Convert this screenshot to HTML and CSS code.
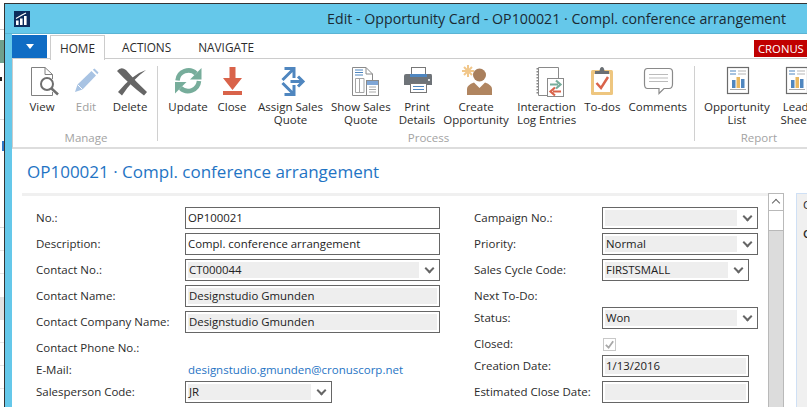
FILE: index.html
```html
<!DOCTYPE html>
<html lang="en">
<head>
<meta charset="utf-8">
<title>Edit - Opportunity Card</title>
<link rel="stylesheet" href="styles.css">
</head>
<body>
<div class="desk"></div>
<div class="window">
  <header class="titlebar">
    <svg class="logo" viewBox="0 0 16 16"><rect width="16" height="16" fill="#0d2b5c"/><path d="M2 14V9.500h2.600V14zM6 14V7.500h2.600V14zM10 14V5h2.600V14z" fill="#fff"/><path d="M2 7.500 8 4l4-2" fill="none" stroke="#fff" stroke-width="1.100"/></svg>
    <div class="title">Edit - Opportunity Card - OP100021 · Compl. conference arrangement</div>
  </header>
  <div class="shell">
    <nav class="tabs">
      <div class="filebtn"><span class="caret"></span></div>
      <div class="tab active">HOME</div>
      <div class="tab t-actions">ACTIONS</div>
      <div class="tab t-navigate">NAVIGATE</div>
      <div class="cronus">CRONUS</div>
    </nav>
    <section class="ribbon">
      <div class="group group-manage">
        <div class="buttons">
          <div class="rbtn">
            <svg class="ico" viewBox="0 0 32 32"><path d="M5.500 2.500H19L26.500 9.500V14M19 2.500V9.500H26.500M26.500 27V30.500H5.500V2.500" fill="none" stroke="#808080"/><circle cx="21" cy="19" r="6" fill="#fff" stroke="#6f6f6f" stroke-width="2"/><path d="M25.500 23.500 32 29.500" stroke="#6f6f6f" stroke-width="2.500"/></svg>
            <span class="lbl">View</span>
          </div>
          <div class="rbtn off">
            <svg class="ico" viewBox="0 0 32 32"><path d="M5 27 7.500 19.500 21.500 6 26 10.500 12.500 24.500Z" fill="#a8c3e3"/><path d="M22.800 4.700 24.500 3.500 28.500 7.500 27.300 9.200Z" fill="#a8c3e3"/><path d="M7.500 19.500 12.500 24.500" stroke="#fff"/></svg>
            <span class="lbl">Edit</span>
          </div>
          <div class="rbtn">
            <svg class="ico" viewBox="0 0 32 32"><path d="M3 6Q7 1 12 5 22 17 33 27L30 30.500Q16 20 3 6Z" fill="#666"/><path d="M32 5Q19 9 4 27L8 30.500Q18 15 32 5Z" fill="#666"/></svg>
            <span class="lbl">Delete</span>
          </div>
        </div>
        <div class="grouplbl">Manage</div>
      </div>
      <div class="sep"></div>
      <div class="group">
        <div class="buttons">
          <div class="rbtn tight">
            <svg class="ico" viewBox="0 0 32 32"><path d="M5.500 15.500A11 11 0 0 1 24 8.500" fill="none" stroke="#77ad9b" stroke-width="4.500"/><path d="M29.500 3V14.500H18Z" fill="#77ad9b"/><path d="M27 16A11 11 0 0 1 8.500 23" fill="none" stroke="#77ad9b" stroke-width="4.500"/><path d="M3 28.500V17H14.500Z" fill="#77ad9b"/></svg>
            <span class="lbl">Update</span>
          </div>
          <div class="rbtn">
            <svg class="ico" viewBox="0 0 32 32"><path d="M13.500 2H19.500V13H26L16.500 25 7 13H13.500Z" fill="#d9634a"/><rect x="7" y="26" width="19" height="4" fill="#d9634a"/></svg>
            <span class="lbl">Close</span>
          </div>
          <div class="rbtn">
            <svg class="ico" viewBox="0 0 32 32"><g fill="none" stroke="#4f86bf" stroke-width="3"><path d="M8.500 15 19 4.500M10.500 3.500H20V13"/><path d="M8.500 18 19 28.500M10.500 29.500H20V20"/><path d="M16.500 16.500H28.500M24 11.500 29 16.500 24 21.500"/></g></svg>
            <span class="lbl">Assign Sales<br>Quote</span>
          </div>
          <div class="rbtn">
            <svg class="ico" viewBox="0 0 32 32"><path d="M7.500 2.500H21L27.500 9V16M21 2.500V9H27.500M21 30.500H7.500V2.500" fill="none" stroke="#8a8a8a"/><path d="M10 5h8M10 7.500h8M10 10h8" stroke="#4f86bf"/><path d="M10.500 13.500H19V27.500H10.500ZM14.500 13.500V27.500" fill="none" stroke="#a5a5a5"/><rect x="21.500" y="15.500" width="12" height="15" fill="#fff" stroke="#8a8a8a"/><rect x="22" y="16" width="11" height="4" fill="#7fa6d6"/><path d="M24 22h7M24 24.500h7M24 27h7" stroke="#aaa"/></svg>
            <span class="lbl">Show Sales<br>Quote</span>
          </div>
          <div class="rbtn">
            <svg class="ico" viewBox="0 0 32 32"><rect x="10.500" y="2.500" width="14" height="9" fill="#fff" stroke="#777"/><path d="M5 9H30Q31 9 31 11V20H3V11Q3 9 5 9Z" fill="#6e7378"/><rect x="9" y="9" width="17" height="3" fill="#4f86bf"/><circle cx="28" cy="15" r="1" fill="#fff"/><rect x="9.500" y="18.500" width="16" height="9" fill="#fff" stroke="#777"/><path d="M12 21.500H23M12 24.500H23" stroke="#4f86bf"/></svg>
            <span class="lbl">Print<br>Details</span>
          </div>
          <div class="rbtn">
            <svg class="ico" viewBox="0 0 32 32"><path d="M8 0V12M2 6H14M4 2 12 10M12 2 4 10" stroke="#f1c78b" stroke-width="2"/><circle cx="19.500" cy="10" r="6.500" fill="#a97f5c"/><path d="M7 30V24Q7 20 14 17.500L19.500 23 25 17.500Q32 20 32 24V30Z" fill="#b08560"/></svg>
            <span class="lbl">Create<br>Opportunity</span>
          </div>
          <div class="rbtn">
            <svg class="ico" viewBox="0 0 32 32"><path d="M7.500 2.500H27.500V13M16 30.500H7.500V2.500" fill="none" stroke="#8a8a8a"/><path d="M6.500 3V30" stroke="#8a8a8a" stroke-width="2" stroke-dasharray="1.500 1.500"/><rect x="16.500" y="13.500" width="16" height="18" fill="#fff" stroke="#8a8a8a"/><path d="M19 19.500H27M25 15.500 29.500 19.500 25 23.500" fill="none" stroke="#77ad9b" stroke-width="2.200"/><path d="M30 26.500H22M24 22.500 19.500 26.500 24 30.500" fill="none" stroke="#d9634a" stroke-width="2.200"/></svg>
            <span class="lbl">Interaction<br>Log Entries</span>
          </div>
          <div class="rbtn">
            <svg class="ico" viewBox="0 0 32 32"><rect x="5" y="5" width="22" height="25" rx="1.500" fill="#eec67f"/><rect x="8" y="9" width="16" height="18" fill="#fff"/><path d="M9 9V6H13.500Q14 2 16 2 18 2 18.500 6H23V9Z" fill="#6a6f73"/><path d="M10.500 18 15 23 22 12" fill="none" stroke="#d9634a" stroke-width="2.500"/></svg>
            <span class="lbl">To-dos</span>
          </div>
          <div class="rbtn">
            <svg class="ico" viewBox="0 0 32 32"><path d="M5.500 3.500H27Q30.500 3.500 30.500 7V19Q30.500 23.500 27 23.500H22L17 28.500V23.500H5.500Q2.500 23.500 2.500 19V7Q2.500 3.500 5.500 3.500Z" fill="#fff" stroke="#8a8a8a" stroke-width="1.200"/><path d="M7 9.500H26M7 13H26M7 16.500H26" stroke="#bbb"/></svg>
            <span class="lbl">Comments</span>
          </div>
        </div>
        <div class="grouplbl">Process</div>
      </div>
      <div class="sep"></div>
      <div class="group group-report">
        <div class="buttons">
          <div class="rbtn">
            <svg class="ico" viewBox="0 0 32 32"><rect x="6.500" y="2.500" width="21" height="26" fill="#fff" stroke="#6b6b6b" stroke-width="1.200"/><path d="M9 6H15M9 9H15" stroke="#4f86bf"/><path d="M17 6H25M17 9H25" stroke="#b5b5b5"/><rect x="11" y="15" width="3.500" height="8" fill="#4f86bf"/><rect x="15.500" y="12" width="3.500" height="11" fill="#e9b75f"/><rect x="20" y="14" width="3.500" height="9" fill="#4f86bf"/><path d="M9 24.500H25" stroke="#aaa"/></svg>
            <span class="lbl">Opportunity<br>List</span>
          </div>
          <div class="rbtn">
            <svg class="ico" viewBox="0 0 32 32"><rect x="6.500" y="2.500" width="21" height="26" fill="#fff" stroke="#6b6b6b" stroke-width="1.200"/><path d="M9 6H15M9 9H15" stroke="#4f86bf"/><path d="M17 6H25M17 9H25" stroke="#b5b5b5"/><rect x="11" y="15" width="3.500" height="8" fill="#4f86bf"/><rect x="15.500" y="12" width="3.500" height="11" fill="#e9b75f"/><rect x="20" y="14" width="3.500" height="9" fill="#4f86bf"/><path d="M9 24.500H25" stroke="#aaa"/></svg>
            <span class="lbl">Lead<br>Sheet</span>
          </div>
        </div>
        <div class="grouplbl">Report</div>
      </div>
    </section>
    <main class="page">
      <h1 class="heading">OP100021 · Compl. conference arrangement</h1>
      <div class="body">
        <div class="card">
          <div class="col col-left">
            <div class="row"><label>No.:</label><div class="box">OP100021</div></div>
            <div class="row"><label>Description:</label><div class="box">Compl. conference arrangement</div></div>
            <div class="row"><label>Contact No.:</label><div class="box"><span class="fill">CT000044</span><span class="chev"></span></div></div>
            <div class="row"><label>Contact Name:</label><div class="box"><span class="fill">Designstudio Gmunden</span></div></div>
            <div class="row"><label>Contact Company Name:</label><div class="box"><span class="fill">Designstudio Gmunden</span></div></div>
            <div class="row plain"><label>Contact Phone No.:</label></div>
            <div class="row plain"><label>E-Mail:</label><a class="mail">designstudio.gmunden@cronuscorp.net</a></div>
            <div class="row"><label>Salesperson Code:</label><div class="box short"><span class="fill">JR</span><span class="chev"></span></div></div>
          </div>
          <div class="col col-right">
            <div class="row"><label>Campaign No.:</label><div class="box"><span class="fill"></span><span class="chev"></span></div></div>
            <div class="row"><label>Priority:</label><div class="box"><span class="fill">Normal</span><span class="chev"></span></div></div>
            <div class="row"><label>Sales Cycle Code:</label><div class="box narrow"><span class="fill">FIRSTSMALL</span><span class="chev"></span></div></div>
            <div class="row plain"><label>Next To-Do:</label></div>
            <div class="row"><label>Status:</label><div class="box"><span class="fill">Won</span><span class="chev"></span></div></div>
            <div class="row plain"><label>Closed:</label><span class="check"><svg viewBox="0 0 12 12"><path d="M2 6.500 5 9.500 10 2.500" fill="none" stroke="#a8a8a8" stroke-width="2"/></svg></span></div>
            <div class="row"><label>Creation Date:</label><div class="box narrow"><span class="fill">1/13/2016</span></div></div>
            <div class="row"><label>Estimated Close Date:</label><div class="box narrow"><span class="fill"></span></div></div>
          </div>
        </div>
        <div class="scroll">
          <div class="sbtn"><span class="up"></span></div>
          <div class="thumb"></div>
          <div class="track"></div>
        </div>
        <aside class="side">
          <div class="side-a">Customer</div>
          <div class="side-b">Contact</div>
        </aside>
      </div>
    </main>
  </div>
</div>
</body>
</html>
```

FILE: styles.css
```css
* { box-sizing: border-box; }
html, body { margin: 0; height: 100%; }
body {
  width: 807px;
  height: 407px;
  overflow: hidden;
  display: flex;
  background: #fff;
  font-family: "Open Sans", "Noto Sans", sans-serif;
  font-size: 11.5px;
  color: #2b2b2b;
}
.desk {
  width: 4px;
  flex: none;
  background:
    linear-gradient(#6f9f8c, #6f9f8c) 0 40px / 4px 23px no-repeat,
    linear-gradient(#222, #222) 0 77px / 2px 4px no-repeat,
    linear-gradient(#ccc, #ccc) 0 29px / 4px 1px no-repeat,
    linear-gradient(#ddd, #ddd) 0 119px / 4px 1px no-repeat,
    linear-gradient(#2f78c8, #2f78c8) 2px 141px / 2px 10px no-repeat,
    linear-gradient(#ddd, #ddd) 0 227px / 4px 1px no-repeat,
    linear-gradient(#e6e6e6, #e6e6e6) 0 250px / 4px 1px no-repeat,
    linear-gradient(#e6e6e6, #e6e6e6) 0 273px / 4px 1px no-repeat,
    linear-gradient(#e2e2e2, #e2e2e2) 0 297px / 4px 23px no-repeat,
    linear-gradient(#e6e6e6, #e6e6e6) 0 342px / 4px 1px no-repeat,
    linear-gradient(#e6e6e6, #e6e6e6) 0 365px / 4px 1px no-repeat,
    linear-gradient(#e6e6e6, #e6e6e6) 0 388px / 4px 1px no-repeat;
}
.window {
  flex: 1;
  min-width: 0;
  margin-top: 3px;
  display: flex;
  flex-direction: column;
  background: #65c8ea;
  border-left: 1px solid #333;
  border-top: 1px solid #333;
}
.titlebar {
  height: 30px;
  flex: none;
  display: flex;
  align-items: center;
  padding: 0 21px 0 9px;
  border-bottom: 1px solid #5bb4d4;
}
.logo { width: 16px; height: 16px; display: block; }
.title {
  margin-left: auto;
  font-size: 14.2px;
  color: #1b2a33;
  white-space: nowrap;
}
.shell {
  flex: 1;
  min-height: 0;
  margin-left: 7px;
  background: #fff;
  display: flex;
  flex-direction: column;
}
.tabs {
  height: 25px;
  flex: none;
  display: flex;
  border-bottom: 1px solid #ccc;
  font-size: 11.8px;
}
.filebtn {
  width: 35px;
  height: 23px;
  margin-top: 1px;
  background: #0f6cc4;
  display: flex;
  align-items: center;
  justify-content: center;
}
.caret {
  width: 0;
  height: 0;
  border-left: 4px solid transparent;
  border-right: 4px solid transparent;
  border-top: 5px solid #fff;
}
.tab {
  line-height: 27px;
  white-space: nowrap;
}
.tab.active {
  width: 55px;
  height: 25px;
  margin: 1px 0 -1px 3px;
  line-height: 24px;
  text-align: center;
  border: 1px solid #ccc;
  border-bottom: 0;
  background: #fff;
}
.t-actions { margin-left: 17px; }
.t-navigate { margin-left: 27px; }
.cronus {
  margin-left: auto;
  margin-top: 6px;
  height: 17px;
  width: 53px;
  padding-left: 4px;
  background: #c00000;
  color: #fff;
  font-size: 11.3px;
  line-height: 17px;
  white-space: nowrap;
}
.ribbon {
  height: 90px;
  flex: none;
  display: flex;
  padding-left: 7px;
  border-left: 1px solid #ccc;
  border-bottom: 2px solid #ddd;
}
.group {
  display: flex;
  flex-direction: column;
  flex: none;
}
.group-manage { padding-right: 2px; }
.group-report { margin-left: -3px; }
.buttons {
  flex: 1;
  display: flex;
}
.rbtn {
  min-width: 44px;
  padding: 6px 4px 0;
  display: flex;
  flex-direction: column;
  align-items: center;
  text-align: center;
  white-space: nowrap;
}
.rbtn.tight { padding-left: 0; padding-right: 0; }
.ico {
  width: 32px;
  height: 32px;
  display: block;
  flex: none;
  overflow: visible;
}
.lbl {
  margin-top: 3px;
  line-height: 13px;
}
.off .lbl { color: #a0a0a0; }
.grouplbl {
  text-align: center;
  color: #a3a3a3;
  line-height: 14px;
  margin-bottom: 2px;
}
.sep {
  width: 1px;
  margin: 7px 8px 6px 3px;
  background: #d0d0d0;
  flex: none;
}
.page {
  flex: 1;
  min-height: 0;
  padding-left: 10px;
  display: flex;
  flex-direction: column;
}
.heading {
  margin: 0;
  height: 44px;
  flex: none;
  padding-left: 5px;
  font-size: 17px;
  font-weight: 400;
  line-height: 46px;
  color: #1f74c4;
  white-space: nowrap;
}
.body {
  flex: 1;
  min-height: 0;
  display: flex;
}
.card {
  width: 746px;
  flex: none;
  border-top: 3px solid #f0f0f0;
  padding: 11px 0 0 14px;
  display: flex;
  gap: 34px;
}
.col { display: flex; flex-direction: column; }
.col-left { width: 404px; }
.col-right { width: 284px; }
.row {
  display: flex;
  align-items: center;
  min-height: 22px;
  margin-bottom: 4px;
  white-space: nowrap;
}
.row.plain { margin-bottom: 0; height: 22px; }
.row label { flex: none; padding-bottom: 2px; }
.col-left label { width: 149px; }
.col-right label { width: 128px; }
.box {
  flex: 1;
  height: 22px;
  border: 1px solid #666;
  padding: 2px 2px;
  display: flex;
  align-items: center;
  font-size: 11.4px;
  line-height: 16px;
  color: #222;
}
.box.short { flex: none; width: 147px; }
.box.narrow { flex: none; width: 147px; }
.fill {
  flex: 1;
  min-width: 0;
  height: 16px;
  background: #eee;
  padding-left: 1px;
}
.chev {
  flex: none;
  width: 18px;
  height: 100%;
  position: relative;
}
.chev::after {
  content: "";
  position: absolute;
  left: 7px;
  top: 3px;
  width: 5px;
  height: 5px;
  border-right: 2px solid #666;
  border-bottom: 2px solid #666;
  transform: rotate(45deg);
}
.mail { color: #1f74c4; padding: 0 0 2px 3px; }
.check {
  width: 13px;
  height: 13px;
  margin-left: 1px;
  border: 1px solid #c8c8c8;
  display: block;
}
.check svg { display: block; width: 11px; height: 11px; }
.scroll {
  width: 16px;
  flex: none;
  display: flex;
  flex-direction: column;
  border: 1px solid #b9b9b9;
  border-bottom: 0;
}
.sbtn {
  height: 17px;
  flex: none;
  border-bottom: 1px solid #b9b9b9;
  position: relative;
}
.up {
  position: absolute;
  left: 4px;
  top: 6px;
  width: 6px;
  height: 6px;
  border-left: 1px solid #666;
  border-top: 1px solid #666;
  transform: rotate(45deg);
}
.thumb {
  height: 20px;
  flex: none;
  border-bottom: 1px solid #b9b9b9;
}
.track { flex: 1; background: #dcdcdc; }
.side {
  margin-left: 12px;
  flex: 1;
  min-width: 0;
  background: #f0f0f0;
  border-left: 1px solid #cfe0f5;
  border-top: 1px solid #cfe0f5;
  overflow: hidden;
  padding: 3px 0 0 6px;
  white-space: nowrap;
}
.side-a { line-height: 16px; }
.side-b { line-height: 16px; margin-top: 13px; font-weight: 600; }
```
